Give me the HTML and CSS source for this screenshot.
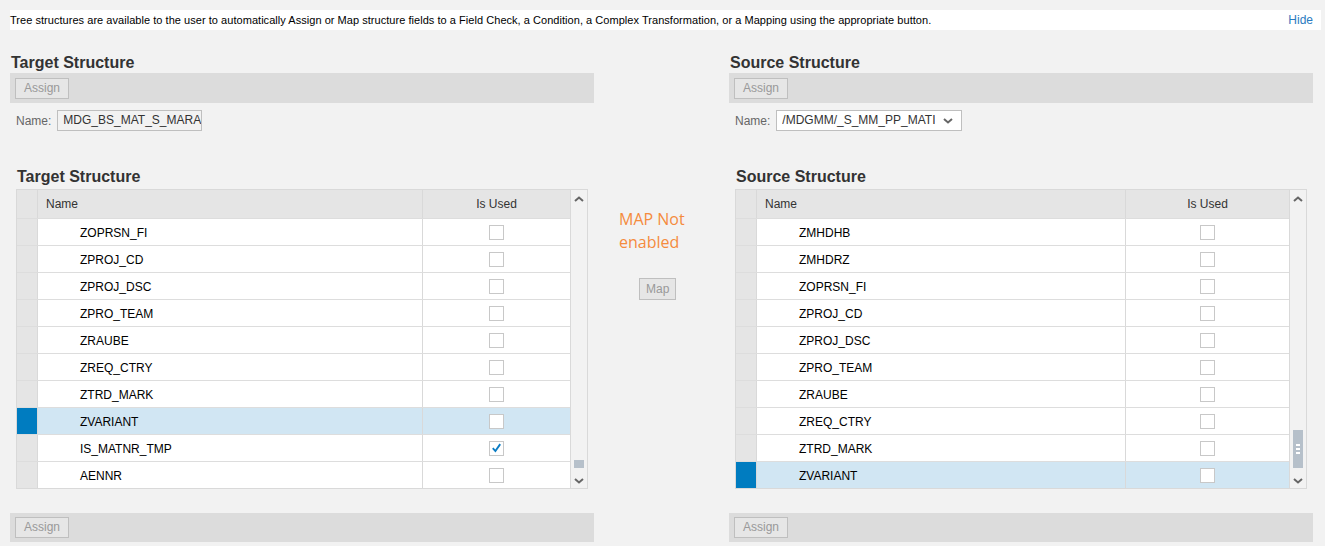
FILE: index.html
```html
<!DOCTYPE html>
<html>
<head>
<meta charset="utf-8">
<link rel="stylesheet" href="styles.css">
</head>
<body>
<div class="infobar">
  <span class="info-text">Tree structures are available to the user to automatically Assign or Map structure fields to a Field Check, a Condition, a Complex Transformation, or a Mapping using the appropriate button.</span>
  <a class="hide">Hide</a>
</div>
<div class="main">
  <section class="panel">
    <h2 class="title">Target Structure</h2>
    <div class="toolbar"><button class="btn">Assign</button></div>
    <div class="namerow"><span class="lbl">Name:</span><div class="field">MDG_BS_MAT_S_MARA</div></div>
    <div class="tree">
      <h3 class="subtitle">Target Structure</h3>
      <div class="table">
        <div class="body">
          <div class="row head"><div class="sel"></div><div class="name hn">Name</div><div class="used">Is Used</div></div>
          <div class="row"><div class="sel"></div><div class="name">ZOPRSN_FI</div><div class="used"><span class="cb"></span></div></div>
          <div class="row"><div class="sel"></div><div class="name">ZPROJ_CD</div><div class="used"><span class="cb"></span></div></div>
          <div class="row"><div class="sel"></div><div class="name">ZPROJ_DSC</div><div class="used"><span class="cb"></span></div></div>
          <div class="row"><div class="sel"></div><div class="name">ZPRO_TEAM</div><div class="used"><span class="cb"></span></div></div>
          <div class="row"><div class="sel"></div><div class="name">ZRAUBE</div><div class="used"><span class="cb"></span></div></div>
          <div class="row"><div class="sel"></div><div class="name">ZREQ_CTRY</div><div class="used"><span class="cb"></span></div></div>
          <div class="row"><div class="sel"></div><div class="name">ZTRD_MARK</div><div class="used"><span class="cb"></span></div></div>
          <div class="row selected"><div class="sel"></div><div class="name">ZVARIANT</div><div class="used"><span class="cb"></span></div></div>
          <div class="row"><div class="sel"></div><div class="name">IS_MATNR_TMP</div><div class="used"><span class="cb checked"><svg viewBox="0 0 14 14" width="14" height="14"><path d="M3 7.2 L5.8 10.3 L11 2.8" fill="none" stroke="#0a7cc4" stroke-width="2"/></svg></span></div></div>
          <div class="row"><div class="sel"></div><div class="name">AENNR</div><div class="used"><span class="cb"></span></div></div>
        </div>
        <div class="scroll">
          <svg class="arrow" viewBox="0 0 10 6" width="10" height="6"><path d="M1 5 L5 1.5 L9 5" fill="none" stroke="#666" stroke-width="2"/></svg>
          <div class="track"><div class="thumb small"></div></div>
          <svg class="arrow" viewBox="0 0 10 6" width="10" height="6"><path d="M1 1 L5 4.5 L9 1" fill="none" stroke="#666" stroke-width="2"/></svg>
        </div>
      </div>
    </div>
    <div class="toolbar bottom"><button class="btn">Assign</button></div>
  </section>

  <section class="middle">
    <p class="warn">MAP Not<br>enabled</p>
    <button class="btn map">Map</button>
  </section>

  <section class="panel">
    <h2 class="title">Source Structure</h2>
    <div class="toolbar"><button class="btn">Assign</button></div>
    <div class="namerow"><span class="lbl">Name:</span><div class="field select"><span class="val">/MDGMM/_S_MM_PP_MATI</span><svg viewBox="0 0 10 6" width="10" height="6"><path d="M1 1 L5 4.5 L9 1" fill="none" stroke="#666" stroke-width="2"/></svg></div></div>
    <div class="tree">
      <h3 class="subtitle">Source Structure</h3>
      <div class="table">
        <div class="body">
          <div class="row head"><div class="sel"></div><div class="name hn">Name</div><div class="used r">Is Used</div></div>
          <div class="row"><div class="sel"></div><div class="name">ZMHDHB</div><div class="used r"><span class="cb"></span></div></div>
          <div class="row"><div class="sel"></div><div class="name">ZMHDRZ</div><div class="used r"><span class="cb"></span></div></div>
          <div class="row"><div class="sel"></div><div class="name">ZOPRSN_FI</div><div class="used r"><span class="cb"></span></div></div>
          <div class="row"><div class="sel"></div><div class="name">ZPROJ_CD</div><div class="used r"><span class="cb"></span></div></div>
          <div class="row"><div class="sel"></div><div class="name">ZPROJ_DSC</div><div class="used r"><span class="cb"></span></div></div>
          <div class="row"><div class="sel"></div><div class="name">ZPRO_TEAM</div><div class="used r"><span class="cb"></span></div></div>
          <div class="row"><div class="sel"></div><div class="name">ZRAUBE</div><div class="used r"><span class="cb"></span></div></div>
          <div class="row"><div class="sel"></div><div class="name">ZREQ_CTRY</div><div class="used r"><span class="cb"></span></div></div>
          <div class="row"><div class="sel"></div><div class="name">ZTRD_MARK</div><div class="used r"><span class="cb"></span></div></div>
          <div class="row selected"><div class="sel"></div><div class="name">ZVARIANT</div><div class="used r"><span class="cb"></span></div></div>
        </div>
        <div class="scroll">
          <svg class="arrow" viewBox="0 0 10 6" width="10" height="6"><path d="M1 5 L5 1.5 L9 5" fill="none" stroke="#666" stroke-width="2"/></svg>
          <div class="track"><div class="thumb big"><i></i><i></i><i></i></div></div>
          <svg class="arrow" viewBox="0 0 10 6" width="10" height="6"><path d="M1 1 L5 4.5 L9 1" fill="none" stroke="#666" stroke-width="2"/></svg>
        </div>
      </div>
    </div>
    <div class="toolbar bottom"><button class="btn">Assign</button></div>
  </section>
</div>
</body>
</html>
```
FILE: styles.css
```css
* { box-sizing: border-box; }
html, body { margin: 0; padding: 0; }
body {
  background: #f2f2f2;
  font-family: "Liberation Sans", Arial, sans-serif;
  color: #333;
  width: 1325px;
  height: 546px;
  overflow: hidden;
}
.infobar {
  margin: 10px 4px 0 10px;
  height: 20px;
  background: #fff;
  display: flex;
  align-items: center;
  justify-content: space-between;
  padding: 0 8px 0 0;
}
.info-text { font-size: 11px; color: #000; letter-spacing: 0.04px; }
.hide { font-size: 12px; color: #2b7bbf; }

.main {
  display: flex;
  padding-left: 10px;
  margin-top: 22px;
}
.panel { width: 584px; }
.middle { width: 135px; padding-left: 25px; }

.title {
  margin: 0;
  font-size: 16px;
  line-height: 21px;
  font-weight: bold;
  color: #333;
  padding-left: 1px;
}
.toolbar {
  height: 30px;
  background: #dcdcdc;
  padding: 4px 5px;
  display: flex;
  align-items: center;
}
.toolbar.bottom { margin-top: 24px; height: 29px; }
.btn {
  font-family: "Liberation Sans", Arial, sans-serif;
  font-size: 12px;
  color: #999;
  background: #e6e6e6;
  border: 1px solid #bfbfbf;
  height: 21px;
  padding: 0 8px;
  margin: 0;
  line-height: 19px;
}
.namerow {
  display: flex;
  align-items: center;
  margin-top: 7px;
  height: 21px;
  padding-left: 6px;
}
.lbl { font-size: 12px; color: #666; margin-right: 6px; }
.field {
  height: 21px;
  width: 145px;
  background: #f2f2f2;
  border: 1px solid #bfbfbf;
  font-size: 12px;
  color: #333;
  padding: 0 5px;
  line-height: 19px;
  overflow: hidden;
  white-space: nowrap;
}
.field.select {
  width: 186px;
  background: #fff;
  display: flex;
  align-items: center;
  justify-content: space-between;
  padding-right: 8px;
}
.field.select .val { overflow: hidden; white-space: nowrap; flex: 1; margin-right: 8px; }
.field.select svg { flex: none; }

.tree { padding-left: 6px; margin-top: 35px; }
.subtitle {
  margin: 0 0 2px 0;
  font-size: 16px;
  line-height: 21px;
  font-weight: bold;
  color: #333;
  padding-left: 1px;
}
.table {
  width: 572px;
  height: 300px;
  border: 1px solid #d9d9d9;
  display: flex;
  background: #fff;
}
.body { flex: 1; display: flex; flex-direction: column; }
.row {
  display: flex;
  height: 27px;
  border-top: 1px solid #dddddd;
  font-size: 12px;
  color: #000;
}
.row.head { height: 28px; border-top: none; background: #e5e5e5; color: #333; }
.sel { width: 21px; background: #e5e5e5; border-right: 1px solid #d9d9d9; }
.name {
  flex: 1;
  display: flex;
  align-items: center;
  padding-left: 42px;
  padding-top: 1px;
}
.name.hn { padding-left: 8px; padding-top: 0; }
.used {
  width: 148px;
  border-left: 1px solid #d9d9d9;
  display: flex;
  align-items: center;
  justify-content: center;
}
.used.r { width: 164px; }
.row.selected { background: #d1e6f3; }
.row.selected .sel { background: #007cc0; }
.cb {
  width: 15px;
  height: 15px;
  border: 1px solid #c8c8c8;
  background: #fff;
  display: inline-flex;
  align-items: center;
  justify-content: center;
}
.cb svg { display: block; }
.scroll {
  width: 17px;
  border-left: 1px solid #d9d9d9;
  background: #f2f2f2;
  display: flex;
  flex-direction: column;
  align-items: center;
  padding: 6px 0 4px;
}
.arrow { display: block; flex: none; }
.track { flex: 1; width: 100%; position: relative; }
.thumb {
  position: absolute;
  left: 3px;
  right: 3px;
  background: #b6c0ca;
}
.thumb.small { bottom: 10px; height: 8px; }
.thumb.big {
  bottom: 10px;
  height: 38px;
  display: flex;
  flex-direction: column;
  align-items: center;
  justify-content: center;
  gap: 2px;
}
.thumb.big i { display: block; width: 4px; height: 2px; background: #fff; }

.warn {
  margin: 0;
  margin-top: 156px;
  font-family: "Open Sans", sans-serif;
  font-size: 16px;
  line-height: 23px;
  color: #f58b3d;
}
.btn.map { margin-top: 24px; margin-left: 20px; height: 22px; padding: 0 6px; }
```
